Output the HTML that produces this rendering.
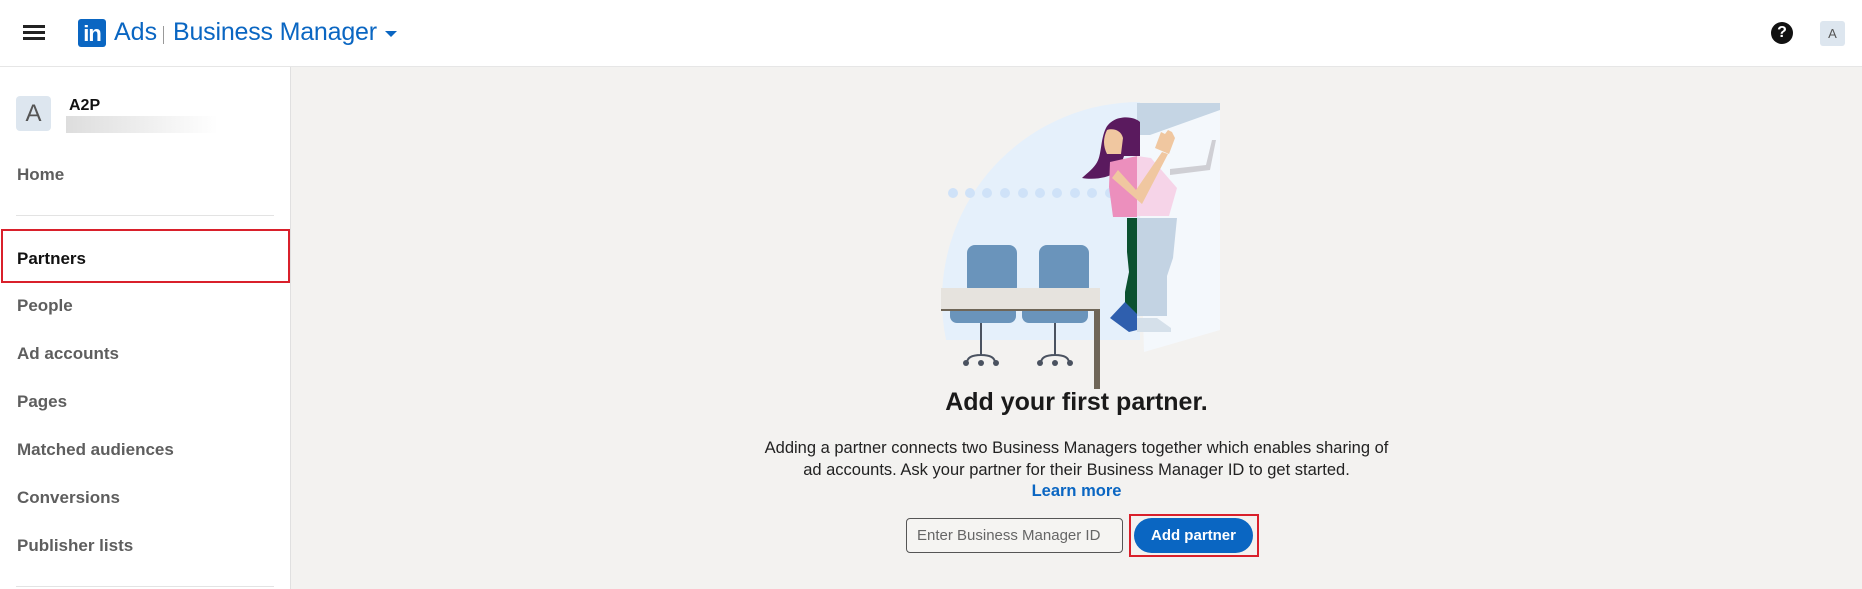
<!DOCTYPE html>
<html><head><meta charset="utf-8"><style>
*{margin:0;padding:0;box-sizing:border-box}
body{width:1862px;height:589px;overflow:hidden;background:#f3f2f0;font-family:"Liberation Sans",sans-serif;position:relative}
.hdr{position:absolute;left:0;top:0;width:1862px;height:67px;background:#fff;border-bottom:1px solid #e6e6e6}
.side{position:absolute;left:0;top:67px;width:291px;height:522px;background:#fff;border-right:1px solid #e0e0e0}
.nav{position:absolute;left:17px;font-size:17px;color:#5e5e5e;font-weight:bold}
.t{position:absolute}
</style></head><body>
<div class="hdr">
 <div class="t" style="left:23px;top:25px;width:22px;height:3px;background:#222;box-shadow:0 6px 0 #222,0 12px 0 #222"></div>
 <div class="t" style="left:78px;top:19px;width:28px;height:28px;background:#0a66c2;border-radius:3px;color:#fff;font-weight:bold;font-size:22px;line-height:29px;text-align:center;letter-spacing:-1px">in</div>
 <div class="t" style="left:114px;top:18px;font-size:25px;color:#0a66c2">Ads</div>
 <div class="t" style="left:163px;top:26px;width:1px;height:18px;background:#999"></div>
 <div class="t" style="left:173px;top:18px;font-size:25px;color:#0a66c2;letter-spacing:-0.2px">Business Manager</div>
 <div class="t" style="left:385px;top:31px;width:0;height:0;border-left:6px solid transparent;border-right:6px solid transparent;border-top:6px solid #0a66c2"></div>
 <div class="t" style="left:1771px;top:22px;width:22px;height:22px;border-radius:50%;background:#111;color:#fff;font-weight:bold;font-size:16px;text-align:center;line-height:22px">?</div>
 <div class="t" style="left:1820px;top:21px;width:25px;height:25px;border-radius:3px;background:#dde6ef;color:#555;font-size:13px;text-align:center;line-height:25px">A</div>
</div>
<div class="side">
 <div class="t" style="left:16px;top:29px;width:35px;height:35px;border-radius:4px;background:#dde6ef;color:#555;font-size:24px;text-align:center;line-height:35px">A</div>
 <div class="t" style="left:69px;top:30px;font-size:16px;font-weight:bold;color:#111">A2P</div>
 <div class="t" style="left:66px;top:49px;width:152px;height:17px;background:linear-gradient(90deg,#ddd,#eee 50%,#fff)"></div>
 <div class="nav" style="top:98px">Home</div>
 <div class="t" style="left:16px;top:148px;width:258px;height:1px;background:#e3e3e3"></div>
 <div class="t" style="left:1px;top:162px;width:289px;height:54px;border:2px solid #d9202b"></div>
 <div class="nav" style="top:182px;color:#111">Partners</div>
 <div class="nav" style="top:229px">People</div>
 <div class="nav" style="top:277px">Ad accounts</div>
 <div class="nav" style="top:325px">Pages</div>
 <div class="nav" style="top:373px">Matched audiences</div>
 <div class="nav" style="top:421px">Conversions</div>
 <div class="nav" style="top:469px">Publisher lists</div>
 <div class="t" style="left:16px;top:519px;width:258px;height:1px;background:#e3e3e3"></div>
</div>
<svg class="t" style="left:0;top:0" width="1862" height="589">
 <defs><clipPath id="c"><rect x="930" y="100" width="210" height="240"/></clipPath></defs>
 <circle cx="1140" cy="300" r="198" fill="#e5f0fb" clip-path="url(#c)"/>
 <polygon points="1137,103 1220,103 1220,330 1144,352" fill="#f4f8fc"/>
 <polygon points="1137,103 1220,103 1220,110 1150,135 1137,135" fill="#c5d5e4"/>
 <g fill="#cfe2f8">
  <circle cx="953" cy="193" r="5"/><circle cx="970" cy="193" r="5"/><circle cx="987" cy="193" r="5"/><circle cx="1005" cy="193" r="5"/><circle cx="1023" cy="193" r="5"/><circle cx="1040" cy="193" r="5"/><circle cx="1057" cy="193" r="5"/><circle cx="1075" cy="193" r="5"/><circle cx="1092" cy="193" r="5"/><circle cx="1110" cy="193" r="5"/>
 </g>
 <rect x="967" y="245" width="50" height="50" rx="8" fill="#6a94bb"/>
 <rect x="1039" y="245" width="50" height="50" rx="8" fill="#6a94bb"/>
 <rect x="950" y="305" width="66" height="18" rx="7" fill="#6a94bb"/>
 <rect x="1022" y="305" width="66" height="18" rx="7" fill="#6a94bb"/>
 <rect x="941" y="288" width="159" height="22" fill="#e6e3de"/>
 <rect x="941" y="309" width="159" height="2" fill="#6f6658"/>
 <rect x="1094" y="309" width="6" height="80" fill="#6f6658"/>
 <g stroke="#4a5260" stroke-width="2" fill="none"><path d="M981 323V356M967 363q0-8 14-8t14 8M1055 323V356M1041 363q0-8 14-8t14 8"/></g>
 <g fill="#4a5260"><circle cx="966" cy="363" r="3"/><circle cx="981" cy="363" r="3"/><circle cx="996" cy="363" r="3"/><circle cx="1040" cy="363" r="3"/><circle cx="1055" cy="363" r="3"/><circle cx="1070" cy="363" r="3"/></g>
 <!-- woman -->
 <path d="M1140 122c-6-6-26-8-34 6-6 12-4 28-10 36-4 6-10 10-14 14 12 2 26 0 34-6 4-4 6-10 8-16l16 0z" fill="#5a1a5e"/>
 <path d="M1107 130c6-2 14 0 16 8l-2 16-14 0c-4-8-4-16 0-24z" fill="#f0c7a0"/>
 <path d="M1110 162l27-6v61h-24l-4-30z" fill="#ec8fbd"/>
 <path d="M1137 156l14 2 26 30-8 28h-32z" fill="#f6d4e8"/>
 <path d="M1118 170l18 20 26-38 6 2-26 50-30-26z" fill="#f0c7a0"/>
 <path d="M1155 148l6-16 4 2 3-4 4 2 3 6-6 16z" fill="#f0c7a0"/>
 <path d="M1170 175l40-5 6-30-4 0-6 25-36 4z" fill="#cfcfd4"/>
 <path d="M1137 218v100l-12 0 0-26 4-20-2-20 0-34z" fill="#0b5130"/>
 <path d="M1137 218h40l-4 40-6 18v40h-30z" fill="#c3d3e3"/>
 <path d="M1110 318l15-16 12 12v16l-8 2z" fill="#2f5fae"/>
 <path d="M1137 318h20l14 10v4h-34z" fill="#d5e0ea"/>
</svg>
<div class="t" style="left:291px;width:1571px;top:388px;text-align:center;font-size:25px;font-weight:bold;color:#1a1a1a">Add your first partner.</div>
<div class="t" style="left:291px;width:1571px;top:438px;text-align:center;font-size:16.5px;line-height:21.5px;color:#222">Adding a partner connects two Business Managers together which enables sharing of<br>ad accounts. Ask your partner for their Business Manager ID to get started.<br><b style="color:#0a66c2">Learn more</b></div>
<div class="t" style="left:906px;top:518px;width:217px;height:35px;border:1px solid #555;border-radius:4px;background:#f5f4f2;font-size:15px;color:#666;line-height:33px;padding-left:10px">Enter Business Manager ID</div>
<div class="t" style="left:1129px;top:514px;width:130px;height:43px;border:2px solid #d9202b"></div>
<div class="t" style="left:1134px;top:518px;width:119px;height:35px;border-radius:18px;background:#0a66c2;color:#fff;font-weight:bold;font-size:15px;line-height:35px;text-align:center">Add partner</div>
</body></html>
